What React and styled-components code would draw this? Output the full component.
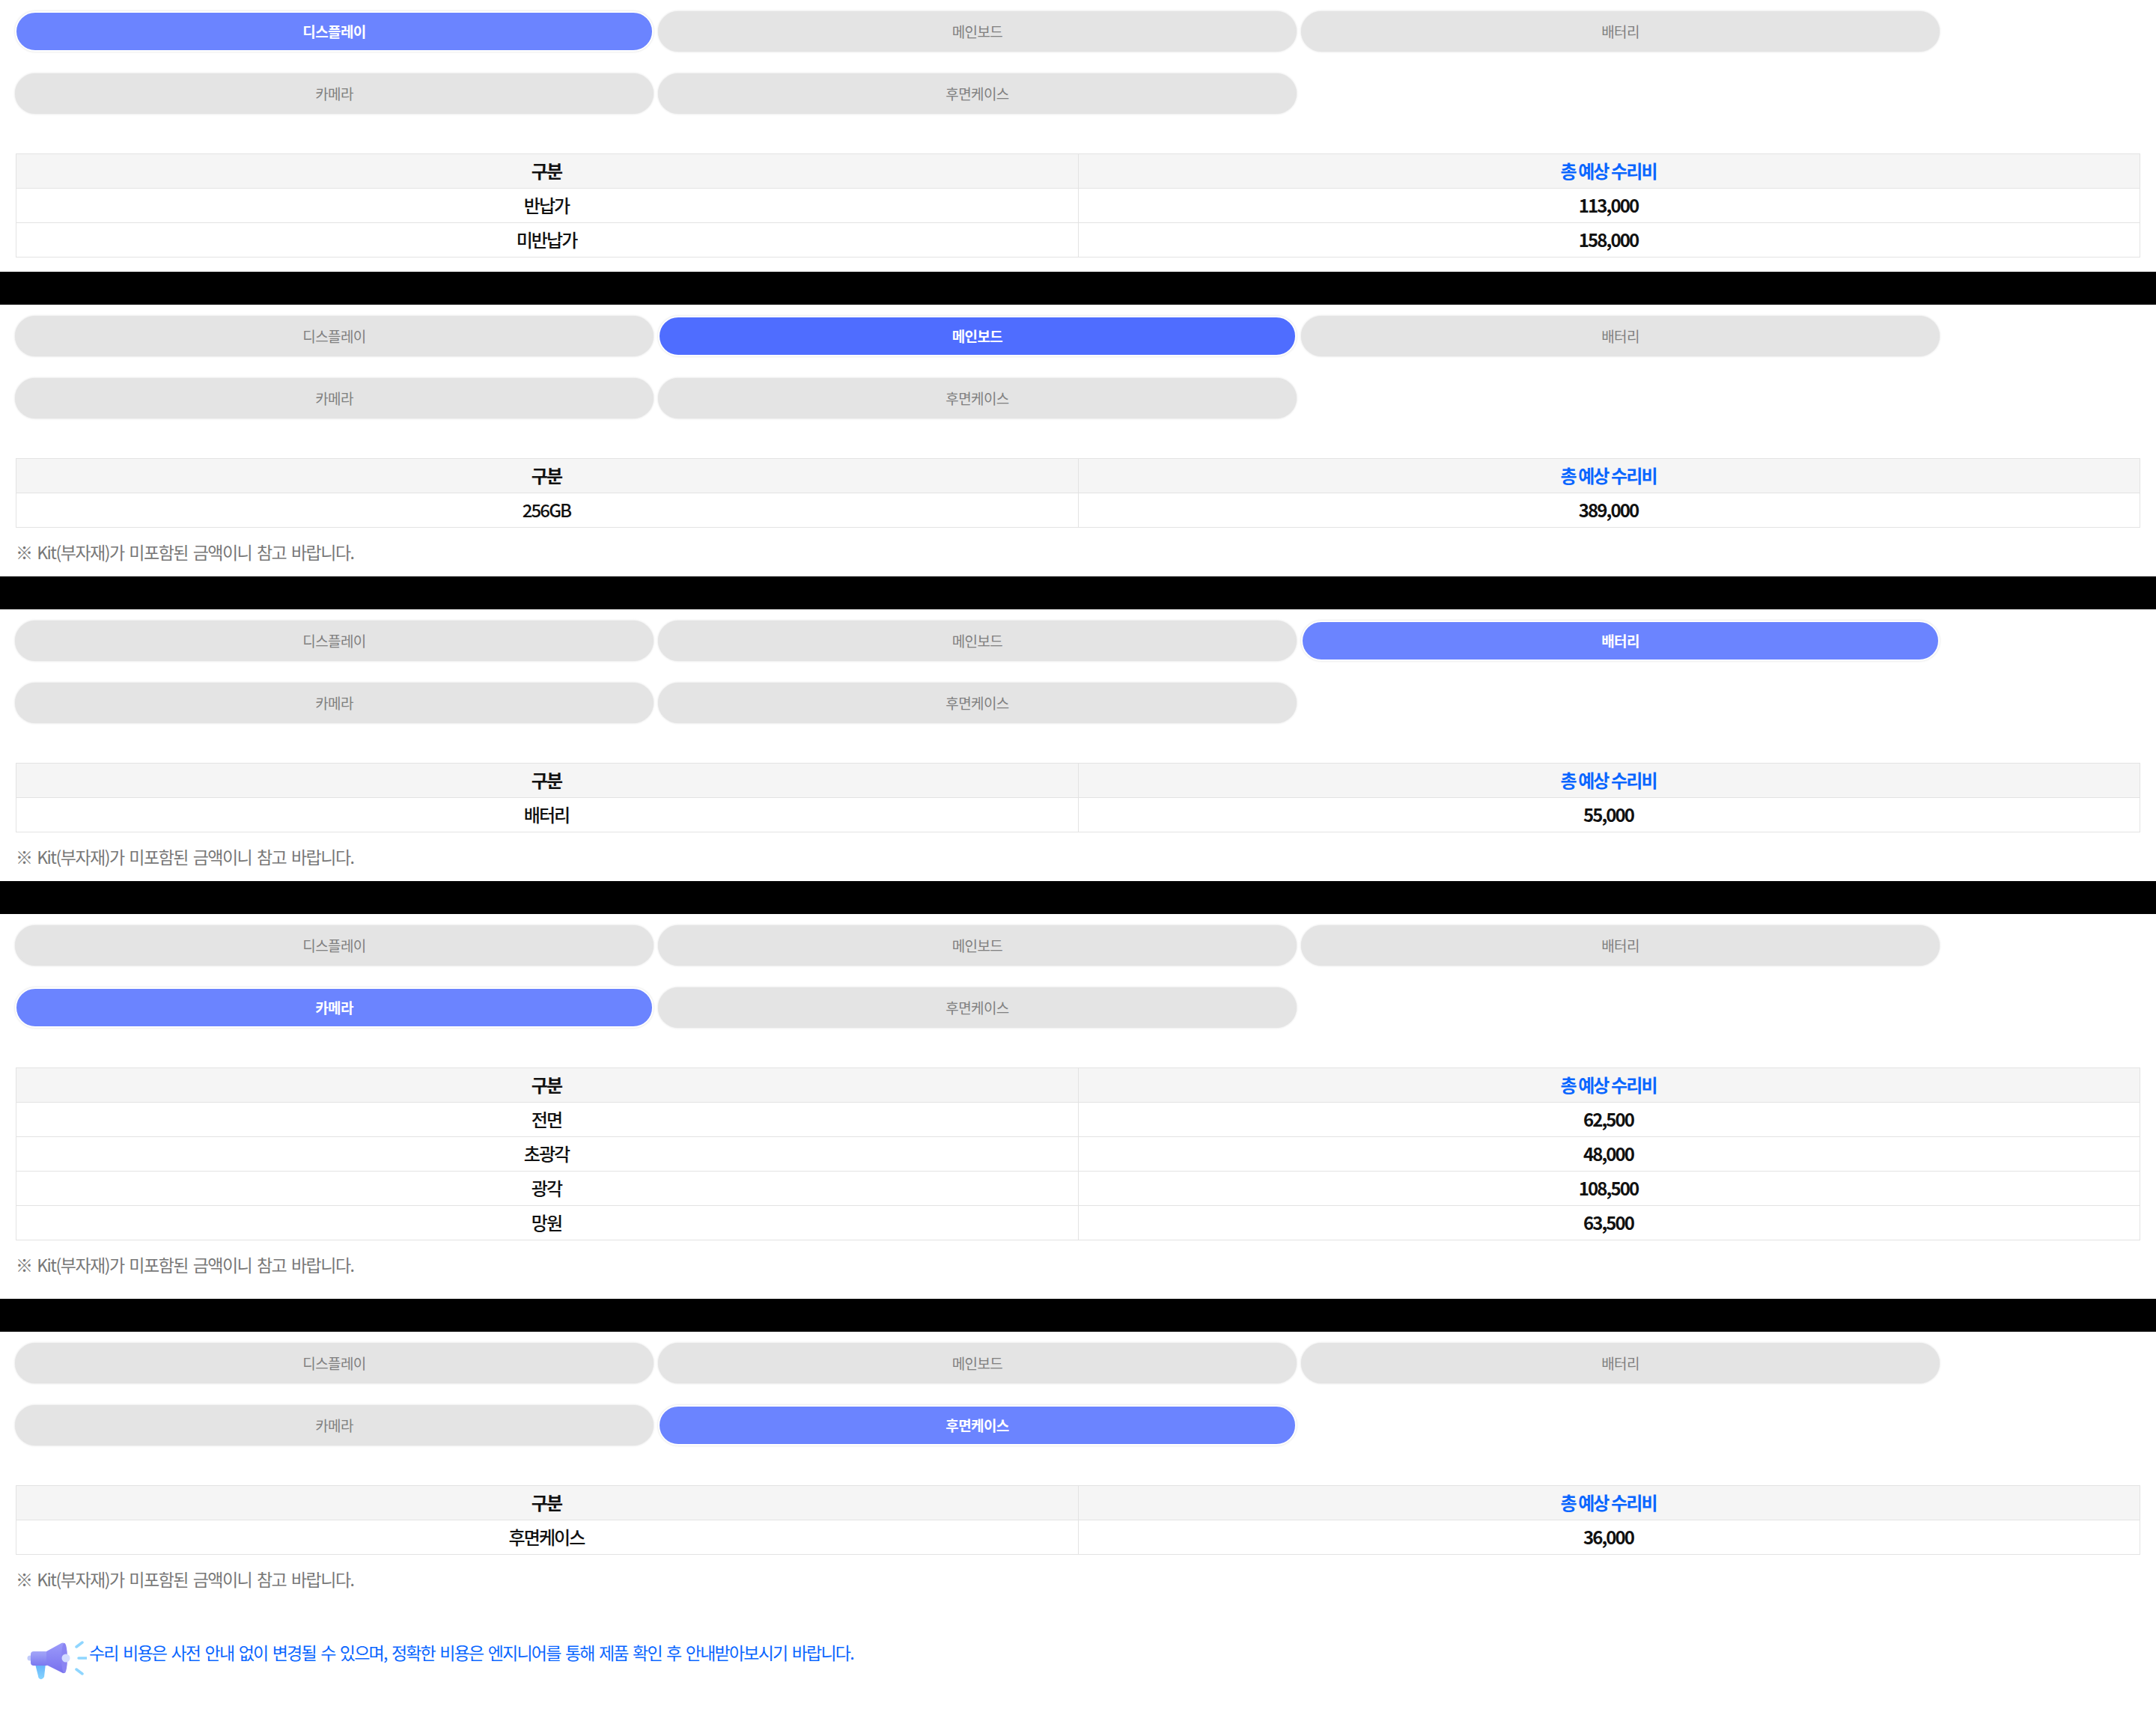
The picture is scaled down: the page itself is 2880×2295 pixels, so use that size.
import React from 'react';
import styled, {createGlobalStyle} from 'styled-components';

const GlobalStyle = createGlobalStyle`
  html, body {
    margin: 0;
    padding: 0;
    background: #fff;
  }
  body {
    font-family: "Noto Sans CJK KR", "Noto Sans", sans-serif;
  }
`;

const Page = styled.div`
  width: 2880px;
  height: 2295px;
  overflow: hidden;
`;

const Section = styled.section`
  padding: 15px 0 ${props => props.$bottom || 0}px;
`;

const Tabs = styled.div`
  display: grid;
  grid-template-columns: repeat(3, 853px);
  column-gap: 6px;
  row-gap: 29px;
  padding-left: 20px;
`;

const Tab = styled.button`
  height: 54px;
  padding: 0 0 2px;
  border: 2px solid ${props => (props.$active ? '#fff' : '#e4e4e4')};
  border-radius: 27px;
  background: ${props => (props.$active ? props.$color : '#e4e4e4')};
  box-shadow: 0 0 3px rgba(0, 0, 0, 0.15);
  color: ${props => (props.$active ? '#fff' : '#808080')};
  font-family: inherit;
  font-size: 19px;
  font-weight: ${props => (props.$active ? 700 : 400)};
  letter-spacing: -0.6px;
`;

const Table = styled.table`
  width: 2838px;
  margin: 53px 0 0 21px;
  border-collapse: collapse;
  table-layout: fixed;
`;

const Cell = styled.td`
  box-sizing: border-box;
  height: 46px;
  padding: 0 2px 2px 0;
  border: 1px solid #e3e3e3;
  background: ${props => (props.$head ? '#f5f5f5' : '#fff')};
  color: ${props => (props.$blue ? '#0a66ff' : '#111')};
  font-size: 24px;
  font-weight: ${props => (props.$bold ? 700 : 500)};
  letter-spacing: -1.9px;
  line-height: 42px;
  text-align: center;
`;

const Note = styled.p`
  height: 65px;
  margin: 0;
  padding-left: 21px;
  color: #777;
  font-size: 23px;
  letter-spacing: -1.5px;
  word-spacing: 3px;
  line-height: 64px;
`;

const Divider = styled.div`
  height: 44px;
  background: #000;
`;

const Callout = styled.div`
  display: flex;
  align-items: flex-start;
  gap: 3px;
  padding: 46px 0 0 32px;
`;

const CalloutText = styled.p`
  margin: 0;
  color: #0a66ff;
  font-size: 23px;
  letter-spacing: -1.8px;
  word-spacing: 3px;
  line-height: 38px;
`;

const TAB_NAMES = ['디스플레이', '메인보드', '배터리', '카메라', '후면케이스'];
const NOTE = '※ Kit(부자재)가 미포함된 금액이니 참고 바랍니다.';

const SECTIONS = [
    {active: 0, bottom: 19, rows: [['반납가', '113,000'], ['미반납가', '158,000']]},
    {active: 1, note: true, color: '#4f6dff', rows: [['256GB', '389,000']]},
    {active: 2, note: true, rows: [['배터리', '55,000']]},
    {
        active: 3,
        note: true,
        bottom: 13,
        rows: [['전면', '62,500'], ['초광각', '48,000'], ['광각', '108,500'], ['망원', '63,500']],
    },
    {active: 4, note: true, rows: [['후면케이스', '36,000']]},
];

const Megaphone = () => (
    <svg width="84" height="62" viewBox="12 10 84 62" fill="none">
        <defs>
            <linearGradient id="cone" x1="0" y1="0" x2="0" y2="1">
                <stop offset="0" stopColor="#9c9bfa"/>
                <stop offset="1" stopColor="#7770ee"/>
            </linearGradient>
            <linearGradient id="back" x1="0" y1="0" x2="0" y2="1">
                <stop offset="0" stopColor="#a4a6f8"/>
                <stop offset="1" stopColor="#7a78f0"/>
            </linearGradient>
            <linearGradient id="handle" x1="0" y1="0" x2="0" y2="1">
                <stop offset="0" stopColor="#62b0fa"/>
                <stop offset="1" stopColor="#86d4ff"/>
            </linearGradient>
        </defs>
        <path d="M27 45 L41 44 L39 62 Q37 66 34 65 Q31 64 31 61 Z" fill="url(#handle)"/>
        <circle cx="20" cy="37" r="3.5" fill="#c2cbfb"/>
        <rect x="21" y="28" width="24" height="19" rx="4" fill="url(#back)"/>
        <path d="M42 28 L62 17 Q66 15 67 20 L67 54 Q66 59 62 56 L42 46 Z" fill="url(#cone)"/>
        <ellipse cx="66" cy="37" rx="4" ry="20" fill="#8a84f2"/>
        <circle cx="68" cy="37" r="5.5" fill="#d3dcff"/>
        <path d="M82 22 L90 16 M85 37 L96 37 M82 52 L90 58" stroke="#8fd6ff" strokeWidth="3.5" strokeLinecap="round"/>
    </svg>
);

const RepairSection = ({active, rows, note, color = '#6b84ff', bottom}) => (
    <Section $bottom={bottom}>
        <Tabs>
            {TAB_NAMES.map((name, index) => (
                <Tab key={name} $active={index === active} $color={color}>{name}</Tab>
            ))}
        </Tabs>
        <Table>
            <colgroup>
                <col style={{width: 1419}}/>
                <col/>
            </colgroup>
            <tbody>
                <tr>
                    <Cell as="th" $head $bold>구분</Cell>
                    <Cell as="th" $head $bold $blue>총 예상 수리비</Cell>
                </tr>
                {rows.map(([label, price]) => (
                    <tr key={label}>
                        <Cell>{label}</Cell>
                        <Cell $bold>{price}</Cell>
                    </tr>
                ))}
            </tbody>
        </Table>
        {note ? <Note>{NOTE}</Note> : null}
    </Section>
);

const App = () => (
    <Page>
        <GlobalStyle/>
        {SECTIONS.map((section, index) => (
            <React.Fragment key={section.active}>
                {index > 0 ? <Divider/> : null}
                <RepairSection {...section}/>
            </React.Fragment>
        ))}
        <Callout>
            <Megaphone/>
            <CalloutText>수리 비용은 사전 안내 없이 변경될 수 있으며, 정확한 비용은 엔지니어를 통해 제품 확인 후 안내받아보시기 바랍니다.</CalloutText>
        </Callout>
    </Page>
);

export default App;
